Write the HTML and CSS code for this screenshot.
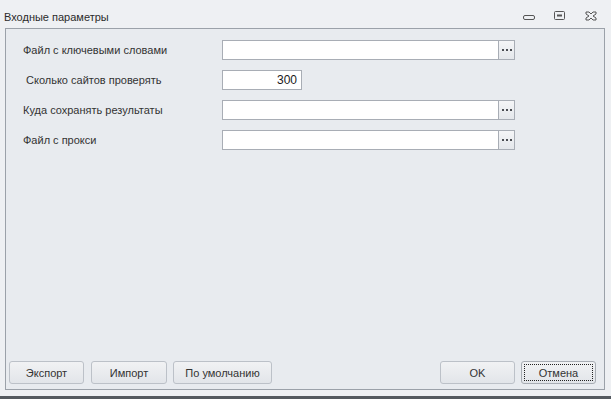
FILE: index.html
```html
<!DOCTYPE html>
<html lang="ru">
<head>
    <meta charset="UTF-8">
    <title>Входные параметры</title>
    <link rel="stylesheet" href="styles.css">
</head>
<body>
    <div class="window">
        <div class="title-bar">
            <span class="title">Входные параметры</span>
            <div class="controls">
                <svg class="ctl" width="12" height="10" viewBox="0 0 12 10"><rect x="0.5" y="4.5" width="11" height="4" rx="1.5" fill="none" stroke="#555" stroke-width="1"/></svg>
                <svg class="ctl" width="12" height="10" viewBox="0 0 12 10"><rect x="0.5" y="0.5" width="10" height="8" rx="1" fill="none" stroke="#555"/><rect x="3" y="3.5" width="5" height="2" fill="#555"/></svg>
                <svg class="ctl" width="12" height="10" viewBox="0 0 12 10"><path d="M1 1 L4 1 L6 3 L8 1 L11 1 L11 3 L8 5 L11 7 L11 9 L8 9 L6 7 L4 9 L1 9 L1 7 L4 5 L1 3 Z" fill="none" stroke="#555"/></svg>
            </div>
        </div>

        <div class="panel">
            <div class="form">
                <div class="row">
                    <label class="label">Файл с ключевыми словами</label>
                    <div class="field">
                        <div class="input"></div>
                        <div class="browse"><i></i><i></i><i></i></div>
                    </div>
                </div>
                <div class="row">
                    <label class="label indent">Сколько сайтов проверять</label>
                    <div class="input number">300</div>
                </div>
                <div class="row">
                    <label class="label">Куда сохранять результаты</label>
                    <div class="field">
                        <div class="input"></div>
                        <div class="browse"><i></i><i></i><i></i></div>
                    </div>
                </div>
                <div class="row">
                    <label class="label">Файл с прокси</label>
                    <div class="field">
                        <div class="input"></div>
                        <div class="browse"><i></i><i></i><i></i></div>
                    </div>
                </div>
            </div>

            <div class="footer">
                <div class="group">
                    <button class="btn w74">Экспорт</button>
                    <button class="btn w76">Импорт</button>
                    <button class="btn w99">По умолчанию</button>
                </div>
                <div class="group right">
                    <button class="btn w75">OK</button>
                    <button class="btn w75 focused">Отмена</button>
                </div>
            </div>
        </div>
    </div>
    <div class="taskbar"></div>
</body>
</html>
```

FILE: styles.css
```css
body {
    margin: 0;
    background: #eef0f3;
    font-family: 'Liberation Sans', Arial, sans-serif;
    font-size: 11px;
    color: #333;
    width: 611px;
    height: 399px;
    overflow: hidden;
}

.window {
    height: 396px;
    display: flex;
    flex-direction: column;
}

.title-bar {
    height: 28px;
    display: flex;
    align-items: center;
    justify-content: space-between;
    padding-left: 4px;
    padding-right: 14px;
    box-sizing: border-box;
}

.title {
    color: #2b2b2b;
    padding-top: 6px;
}

.controls {
    display: flex;
    gap: 19px;
    padding-top: 4px;
}

.panel {
    margin: 0 6px 6px 5px;
    flex: 1;
    border: 1px solid #9ba1a9;
    background: #e8ebef;
    display: flex;
    flex-direction: column;
    justify-content: space-between;
}

.form {
    padding: 11px 0 0 17px;
    display: flex;
    flex-direction: column;
    gap: 10px;
}

.row {
    display: flex;
    align-items: center;
    height: 20px;
}

.label {
    width: 199px;
    color: #333;
}

.indent {
    padding-left: 3px;
    width: 196px;
}

.field {
    display: flex;
    width: 293px;
    height: 20px;
}

.input {
    flex: 1;
    height: 20px;
    box-sizing: border-box;
    background: #fff;
    border: 1px solid #a8adb5;
}

.field .input {
    border-right: none;
}

.number {
    flex: none;
    width: 80px;
    text-align: right;
    padding-right: 4px;
    line-height: 18px;
    font-size: 12px;
    color: #1a1a1a;
}

.browse {
    width: 17px;
    height: 20px;
    box-sizing: border-box;
    border: 1px solid #a8adb5;
    background: linear-gradient(#f4f5f7, #e4e7eb);
    display: flex;
    align-items: center;
    justify-content: center;
    gap: 2px;
}

.browse i {
    width: 2px;
    height: 2px;
    background: #4a4d52;
}

.footer {
    display: flex;
    justify-content: space-between;
    padding: 0 8px 5px 3px;
}

.group {
    display: flex;
    gap: 6px;
}

.group .w76 {
    margin-left: 1px;
}

.btn {
    height: 23px;
    font-family: inherit;
    font-size: 11px;
    color: #333;
    border: 1px solid #bcc1c8;
    border-radius: 3px;
    background: linear-gradient(#f1f2f4, #e2e5e9);
    padding: 0;
    display: flex;
    align-items: center;
    justify-content: center;
}

.w74 { width: 75px; }
.w76 { width: 76px; }
.w99 { width: 99px; }
.w75 { width: 75px; }

.focused {
    position: relative;
    border-color: #a7acb3;
}

.focused::after {
    content: "";
    position: absolute;
    inset: 2px;
    border: 1px dotted #222;
}

.taskbar {
    height: 3px;
    background: #555a60;
}
```
